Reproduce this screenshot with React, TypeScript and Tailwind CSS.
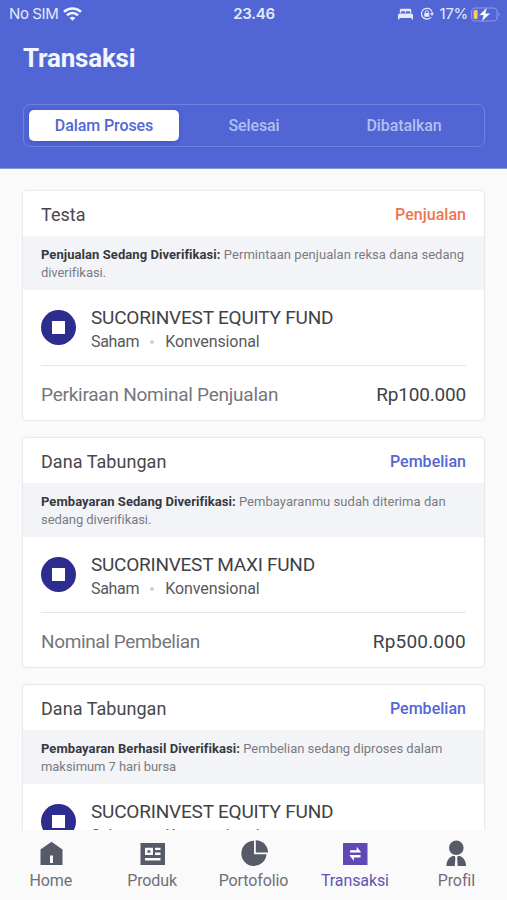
import React from 'react';

type Item = {
  account: string;
  kind: string;
  kindClass: string;
  status: string;
  statusClass: string;
  line1: string;
  line1Class: string;
  line2: string;
  fund: string;
  fundClass: string;
  label?: string;
  labelClass?: string;
  amount?: string;
  amountClass?: string;
};

const items: Item[] = [
  {
    account: 'Testa',
    kind: 'Penjualan',
    kindClass: 'text-[#ed7650]',
    status: 'Penjualan Sedang Diverifikasi:',
    statusClass: 'tracking-[0.06px]',
    line1: 'Permintaan penjualan reksa dana sedang',
    line1Class: 'tracking-[0.05px]',
    line2: 'diverifikasi.',
    fund: 'SUCORINVEST EQUITY FUND',
    fundClass: 'tracking-[-0.2px]',
    label: 'Perkiraan Nominal Penjualan',
    labelClass: 'tracking-[-0.24px]',
    amount: 'Rp100.000',
    amountClass: 'tracking-[-0.2px]',
  },
  {
    account: 'Dana Tabungan',
    kind: 'Pembelian',
    kindClass: 'text-[#5366d3]',
    status: 'Pembayaran Sedang Diverifikasi:',
    statusClass: 'tracking-[0.06px]',
    line1: 'Pembayaranmu sudah diterima dan',
    line1Class: 'tracking-[0.05px]',
    line2: 'sedang diverifikasi.',
    fund: 'SUCORINVEST MAXI FUND',
    fundClass: 'tracking-[-0.25px]',
    label: 'Nominal Pembelian',
    labelClass: 'tracking-[-0.37px]',
    amount: 'Rp500.000',
    amountClass: 'tracking-[0.2px]',
  },
  {
    account: 'Dana Tabungan',
    kind: 'Pembelian',
    kindClass: 'text-[#5366d3]',
    status: 'Pembayaran Berhasil Diverifikasi:',
    statusClass: 'tracking-[0.07px]',
    line1: 'Pembelian sedang diproses dalam',
    line1Class: 'tracking-[0px]',
    line2: 'maksimum 7 hari bursa',
    fund: 'SUCORINVEST EQUITY FUND',
    fundClass: 'tracking-[-0.2px]',
  },
];

function StatusBar() {
  return (
    <div className="grid h-7 grid-cols-3 items-center pr-[6px] pl-[9px] font-[Inter,sans-serif] text-[15px] text-[#e6eaff]">
      <div className="flex items-center gap-[5px]">
        <span className="tracking-[-0.4px]">No SIM</span>
        <svg width="19" height="14" viewBox="0 0 19 14" fill="none" stroke="#f0f3ff" strokeWidth="2.6">
          <path d="M1 4.9C5.8.4 13.2.4 18 4.9" />
          <path d="M4 8.300c3.200-3 7.800-3 11 0" />
          <path d="M6.600 10.900c1.700-1.500 4.100-1.500 5.800 0L9.500 13.800z" fill="#f0f3ff" stroke="none" />
        </svg>
      </div>
      <span className="pr-[2px] text-center font-semibold tracking-[-0.25px]">23.46</span>
      <div className="flex items-center justify-end">
        <svg className="mr-[7px]" width="15" height="12" viewBox="0 0 15 12" fill="#e6eaff">
          <path d="M1.800 5V2.300C1.800 1.200 2.400.7 3.400.7h8.200c1 0 1.600.5 1.600 1.600V5h-1.100v-.7c0-.7-.4-1.100-1-1.100H8.700c-.6 0-.8.4-.8 1V5h-.8v-.8c0-.6-.2-1-.8-1H3.900c-.6 0-1 .4-1 1.100V5z" />
          <path d="M0 7.500C0 6.200.7 5.400 1.800 5.400h11.400c1.100 0 1.800.8 1.800 2.100v3.900h-1.400V9.900H1.400v1.500H0z" />
        </svg>
        <svg className="mr-[6px]" width="14" height="14" viewBox="0 0 14 14" fill="none" stroke="#e6eaff" strokeWidth="1.200">
          <path d="M11.700 4.200A5.400 5.400 0 1 0 11.200 10" />
          <path d="M10 6.300h4L12 9z" fill="#e6eaff" stroke="none" />
          <path d="M11.700 4.200q.5 1 .5 2.500" />
          <rect x="4.300" y="6" width="5" height="3.800" rx=".6" fill="#e6eaff" stroke="none" />
          <path d="M5.300 6.300V5.100a1.500 1.500 0 0 1 3 0v1.200" strokeWidth="1" />
        </svg>
        <span className="mr-[3px] tracking-[-0.3px]">17%</span>
        <svg width="30" height="15" viewBox="0 0 30 15" fill="none">
          <rect x=".6" y="1" width="25.500" height="13" rx="3.800" stroke="#8e9be6" strokeWidth="1.100" />
          <path d="M27.600 5.300c1.500.5 1.500 3.800 0 4.400z" fill="#8e9be6" />
          <rect x="2.600" y="3" width="4" height="9" rx="1.500" fill="#f5ce62" />
          <path d="M16.200.3 8 8.300h4.400L10.600 14.700 19.500 6.300h-4.900z" fill="#fff" stroke="#5366d3" strokeWidth=".4" />
        </svg>
      </div>
    </div>
  );
}

function Tabs() {
  return (
    <div className="grid h-[43px] grid-cols-[150px_150px_150px] rounded-[7px] border border-[#7082df] p-[5px] text-center text-[16px] leading-[31px] font-medium tracking-[-0.1px] text-[#b3bff3]">
      <span className="rounded-[5px] bg-white text-[#5366d3] shadow-[0_1px_4px_rgba(40,55,150,0.35)]">
        Dalam Proses
      </span>
      <span>Selesai</span>
      <span>Dibatalkan</span>
    </div>
  );
}

function Card({ item }: { item: Item }) {
  return (
    <article className="h-[231px] shrink-0 rounded-[5px] border border-[#e8eaee] bg-white shadow-[0_0_2px_rgba(30,40,70,0.05)]">
      <div className="flex h-[45px] items-center justify-between px-[18px] pt-[2px]">
        <span className="text-[18px] tracking-[0.05px] text-[#46474b]">{item.account}</span>
        <span className={`text-[16px] font-medium tracking-[0.02px] ${item.kindClass}`}>{item.kind}</span>
      </div>
      <div className="h-[54px] bg-[#f3f4f8] px-[18px] pt-[10px] text-[13px] leading-[18px] whitespace-nowrap text-[#7a7b80]">
        <div>
          <span className={`font-bold text-[#38393d] ${item.statusClass}`}>{item.status}</span>{' '}
          <span className={item.line1Class}>{item.line1}</span>
        </div>
        <div className="tracking-[-0.06px]">{item.line2}</div>
      </div>
      <div className="mx-[18px] flex h-[76px] items-center gap-[15px] border-b border-[#e4e5e8] whitespace-nowrap">
        <div className="flex size-[35px] items-center justify-center rounded-full bg-[#2c2d8e]">
          <div className="size-[13px] bg-white" />
        </div>
        <div className="pt-[3px]">
          <div className={`text-[19px] leading-[26px] text-[#414246] ${item.fundClass}`}>{item.fund}</div>
          <div className="flex items-center text-[16px] leading-[22px] text-[#58595e]">
            <span className="tracking-[-0.3px]">Saham</span>
            <span className="mx-[11px] size-[4px] rounded-full bg-[#cfd0d4]" />
            <span className="tracking-[-0.1px]">Konvensional</span>
          </div>
        </div>
      </div>
      {item.label && (
        <div className="flex h-[54px] items-center justify-between px-[18px] pt-[4px] text-[19px] whitespace-nowrap">
          <span className={`text-[#75767d] ${item.labelClass}`}>{item.label}</span>
          <span className={`text-[#414246] ${item.amountClass}`}>{item.amount}</span>
        </div>
      )}
    </article>
  );
}

function NavItem({ label, active, children }: { label: string; active?: boolean; children: React.ReactNode }) {
  return (
    <div className={`flex flex-1 flex-col items-center ${active ? 'text-[#6452b8]' : 'text-[#6f7077]'}`}>
      <svg
        className={active ? 'text-[#6049b5]' : 'text-[#575a69]'}
        width="28"
        height="28"
        viewBox="0 0 28 28"
        fill="currentColor"
      >
        {children}
      </svg>
      <span className="mt-[3px] text-[16px] leading-[20px] tracking-[-0.1px]">{label}</span>
    </div>
  );
}

function BottomNav() {
  return (
    <nav className="flex h-[70px] shrink-0 bg-[#fafafb] pt-[10px]">
      <NavItem label="Home">
        <path d="M14.500 1.800 25.500 9.500V25H3.500V9.500zM13 15.500V23h3v-7.500z" fillRule="evenodd" />
      </NavItem>
      <NavItem label="Produk">
        <path
          d="M2.500 3H27v22H2.500zM7 7.700v7.200h8V7.700zM9.500 10.300h2.800v2.500H9.500zM17 7.700v2.400h5.500V7.700zM17 12.500v2.400h5.500v-2.400zM7 18v2.600h15.500V18z"
          fillRule="evenodd"
        />
      </NavItem>
      <NavItem label="Portofolio">
        <path d="M14 .8v13.500h12.500A12.600 12.600 0 1 1 14 .8z" />
        <path d="M15.800.3A12.200 12.200 0 0 1 28 12.500H15.800z" />
      </NavItem>
      <NavItem label="Transaksi" active>
        <path d="M2 3h24.500v22H2z" />
        <path d="M9 10.200h6.700V6.800l4.500 5.800H9zM19.500 17.500h-6.700V21l-4.500-6h11.200z" fill="#fff" />
      </NavItem>
      <NavItem label="Profil">
        <circle cx="14.300" cy="7.800" r="7.300" />
        <path d="M4.500 26c0-5 2.300-8.300 6-9.900h2.300l.6 2.200L12.800 26zM24 26c0-5-2.300-8.300-6-9.900h-2.300l-.6 2.200.6 7.700z" />
      </NavItem>
    </nav>
  );
}

export default function App() {
  return (
    <div className="flex h-[900px] w-[507px] flex-col overflow-hidden bg-[#fafafa] font-[Roboto,sans-serif]">
      <header className="h-[169px] shrink-0 border-b border-[#8794e0] bg-[#5165d4]">
        <StatusBar />
        <div className="pr-[22px] pl-[23px]">
          <h1 className="mt-[13px] mb-[28px] text-[26px] leading-[35px] font-bold tracking-[-0.2px] text-[#f3f5ff]">
            Transaksi
          </h1>
          <Tabs />
        </div>
      </header>
      <main className="flex min-h-0 flex-1 flex-col gap-[16px] overflow-hidden px-[22px] pt-[21px]">
        {items.map((item, i) => (
          <Card key={i} item={item} />
        ))}
      </main>
      <BottomNav />
    </div>
  );
}
